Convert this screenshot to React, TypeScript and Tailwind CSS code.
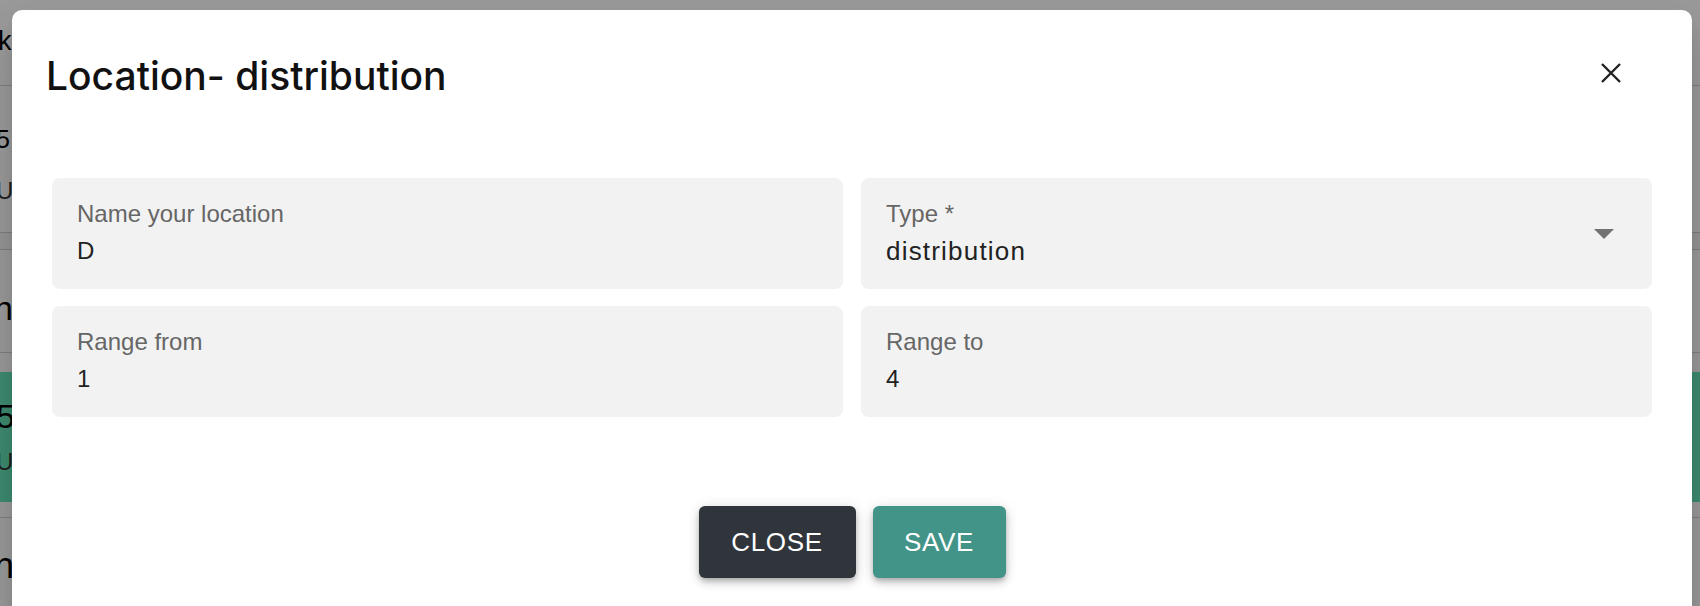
import React from "react";

function Field({ label, value, select }: { label: string; value: string; select?: boolean }) {
  return (
    <div className="relative h-[111px] rounded-[8px] bg-[#f2f2f2] pl-[25px] pt-[22px] flex items-center">
      <div className="flex flex-col self-start">
        <div className="text-[24px] leading-[28px] text-[#666666]">{label}</div>
        <div
          className={
            select
              ? "mt-[9px] text-[26px] leading-[28px] tracking-[1.2px] text-[#222222]"
              : "mt-[9px] text-[24px] leading-[28px] text-[#222222]"
          }
        >
          {value}
        </div>
      </div>
      {select && (
        <svg
          className="absolute right-[38px] top-[51px]"
          width="20"
          height="10"
          viewBox="0 0 20 10"
        >
          <polygon points="0,0 20,0 10,10" fill="#727272" />
        </svg>
      )}
    </div>
  );
}

export default function App() {
  return (
    <div className="relative w-[1700px] h-[606px] overflow-hidden bg-white font-['Liberation_Sans',Arial,sans-serif]">
      {/* page behind the dialog */}
      <div className="flex flex-col text-black">
        <div className="h-[86px] border-b border-[#d4d4d4] -ml-[2px] pt-[26px] text-[27px] leading-[30px]">k</div>
        <div className="h-[146px] -ml-[4px] pt-[38px] flex flex-col">
          <div className="text-[25px] leading-[30px]">5</div>
          <div className="mt-[22px] text-[24px] leading-[30px] text-[#333]">U</div>
        </div>
        <div className="h-[18px] bg-[#f7f7f7] border-y border-[#cfcfcf]" />
        <div className="h-[103px] border-b border-[#d4d4d4] -ml-[6px] pt-[40px] text-[34px] leading-[36px]">n</div>
        <div className="h-[19px]" />
        <div className="h-[130px] bg-[#67e6b9] -ml-[4px] pt-[26px] flex flex-col">
          <div className="text-[34px] leading-[36px]">5</div>
          <div className="mt-[14px] text-[24px] leading-[28px] text-[#333]">U</div>
        </div>
        <div className="h-[16px] border-b border-[#d4d4d4]" />
        <div className="h-[90px] -ml-[6px] pt-[30px] text-[36px] leading-[36px]">n</div>
      </div>
      <div className="absolute inset-0 bg-black/40" />

      {/* dialog */}
      <div className="absolute left-[12px] top-[10px] w-[1680px] h-[660px] rounded-[10px] bg-white shadow-[0_11px_15px_-7px_rgba(0,0,0,0.2),0_24px_38px_3px_rgba(0,0,0,0.14)]">
        <div className="flex items-start justify-between pl-[34px] pr-[57px] pt-[42px]">
          <h2 className="font-['Inter',sans-serif] text-[39px] leading-[47px] font-medium text-[#111111]">
            Location- distribution
          </h2>
          <button className="mt-[-3px] flex h-[48px] w-[48px] items-center justify-center">
            <svg width="20" height="20" viewBox="0 0 20 20">
              <path d="M1 1 L19 19 M19 1 L1 19" stroke="#222222" strokeWidth="2.4" strokeLinecap="butt" />
            </svg>
          </button>
        </div>

        <div className="mt-[79px] grid grid-cols-2 gap-x-[18px] gap-y-[17px] px-[40px]">
          <Field label="Name your location" value="D" />
          <Field label="Type *" value="distribution" select />
          <Field label="Range from" value="1" />
          <Field label="Range to" value="4" />
        </div>

        <div className="mt-[89px] flex justify-center gap-[17px]">
          <button className="h-[72px] w-[157px] rounded-[6px] bg-[#30343b] text-[26px] tracking-[0.7px] text-white shadow-[0_3px_5px_-1px_rgba(0,0,0,0.2),0_5px_8px_0_rgba(0,0,0,0.14),0_1px_14px_0_rgba(0,0,0,0.12)]">
            CLOSE
          </button>
          <button className="h-[72px] w-[133px] rounded-[6px] bg-[#429488] text-[26px] tracking-[0.7px] text-white shadow-[0_3px_5px_-1px_rgba(0,0,0,0.2),0_5px_8px_0_rgba(0,0,0,0.14),0_1px_14px_0_rgba(0,0,0,0.12)]">
            SAVE
          </button>
        </div>
      </div>
    </div>
  );
}
